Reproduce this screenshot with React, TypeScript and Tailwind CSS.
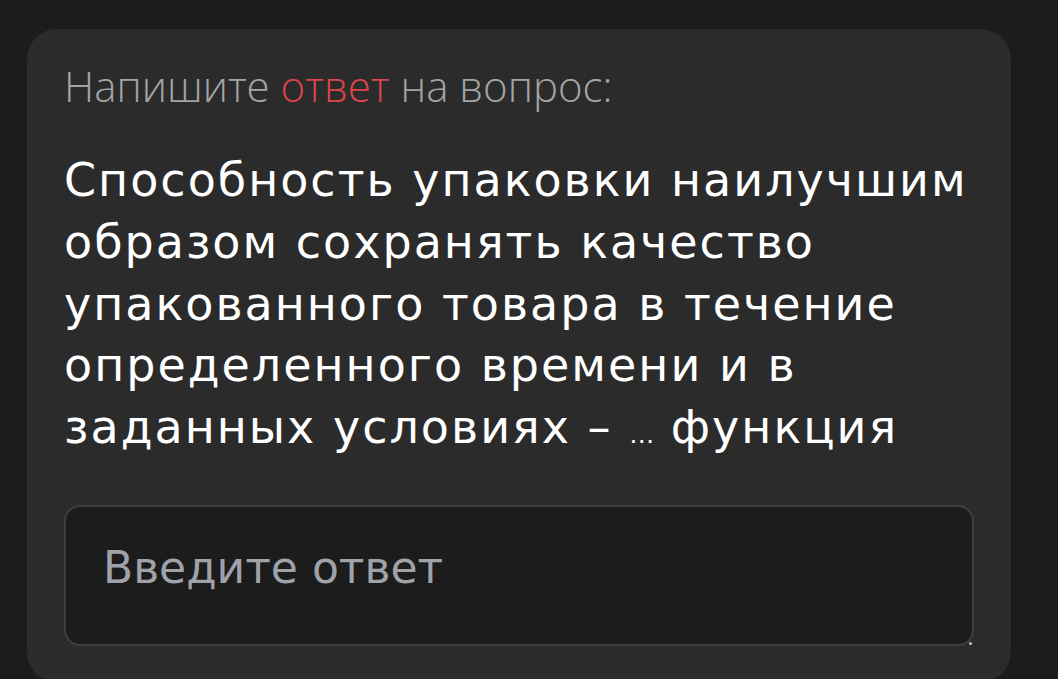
import { useState } from 'react'

// Single free-answer question card: prompt, question body, answer field.

const QUESTION_LINES = [
  'Способность упаковки наилучшим',
  'образом сохранять качество',
  'упакованного товара в течение',
  'определенного времени и в',
]

export default function App() {
  const [answer, setAnswer] = useState('')

  return (
    <div className="min-h-screen overflow-hidden bg-[#1c1c1c] pt-[29px] pl-[27px]">
      <div className="w-[984px] h-[653px] rounded-[30px] bg-[#2b2b2b] px-[37px] pt-[33px]">
        {/* prompt line */}
        <p className="font-['Open_Sans',sans-serif] text-[42px] leading-[48px] font-light text-[#a4a4a4]">
          Напишите <span className="text-[#dd444c]">ответ</span> на вопрос:
        </p>

        {/* question body */}
        <p className="mt-[40px] font-['DejaVu_Sans',sans-serif] text-[46px] leading-[61.75px] tracking-[2px] text-white">
          {QUESTION_LINES.map((line, i) => (
            <span key={i} className="block whitespace-nowrap">
              {line}
            </span>
          ))}
          <span className="block h-[61.75px] whitespace-nowrap">
            заданных условиях – <span className="text-[25px] leading-none tracking-normal">…</span> функция
          </span>
        </p>

        {/* answer field */}
        <div className="relative mt-[46px] w-[910px]">
          <textarea
            value={answer}
            onChange={(e) => setAnswer(e.target.value)}
            placeholder="Введите ответ"
            className="block w-[910px] h-[141px] resize-none rounded-[16px] border-2 border-[#3f3f3f] bg-[#1c1c1c] px-[37px] pt-[35px] font-['DejaVu_Sans',sans-serif] text-[44px] leading-[52px] text-white placeholder:text-[#9fa3a9] outline-none"
          />
          <span className="absolute right-[2px] bottom-[1px] w-[3px] h-[3px] rounded-full bg-[#c4c4c4]" />
        </div>
      </div>
    </div>
  )
}
